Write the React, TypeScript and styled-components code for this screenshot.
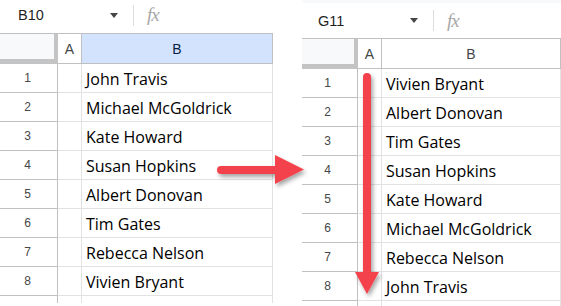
import React from 'react';
import styled, { createGlobalStyle } from 'styled-components';

const GlobalStyle = createGlobalStyle`
    html, body {
        margin: 0;
        padding: 0;
        background: #fff;
    }
    body {
        width: 561px;
        height: 306px;
        overflow: hidden;
        font-family: 'Liberation Sans', Arial, sans-serif;
    }
`;

const Page = styled.div`
    position: relative;
    display: flex;
    gap: 29px;
    width: 561px;
    height: 306px;
    overflow: hidden;
`;

const Frame = styled.div<{ $width: number; $height: number }>`
    width: ${(p) => p.$width}px;
    height: ${(p) => p.$height}px;
    flex-shrink: 0;
    overflow: hidden;
`;

const Sheet = styled.div<{ $shift: number }>`
    margin-left: -${(p) => p.$shift}px;
    display: flex;
    flex-direction: column;
`;

const TopStrip = styled.div`
    height: 3px;
    background: #f8f9fa;
`;

const FormulaBar = styled.div<{ $height: number; $pad: number }>`
    height: ${(p) => p.$height}px;
    padding-bottom: ${(p) => p.$pad}px;
    box-sizing: border-box;
    display: flex;
    align-items: center;
`;

const NameBox = styled.div`
    width: 112px;
    padding-left: 20px;
    box-sizing: border-box;
    font-size: 14.5px;
    color: #1f1f1f;
`;

const Caret = styled.span`
    width: 0;
    height: 0;
    border-left: 4.5px solid transparent;
    border-right: 4.5px solid transparent;
    border-top: 5px solid #444746;
`;

const Divider = styled.span`
    width: 1px;
    height: 21px;
    margin-left: 15px;
    background: #dadce0;
`;

const Fx = styled.span`
    margin-left: 13px;
    font-family: 'Liberation Serif', 'Times New Roman', serif;
    font-style: italic;
    font-size: 19px;
    color: #a8a8a8;
    letter-spacing: -1px;
`;

const GridRow = styled.div<{ $header?: boolean }>`
    display: grid;
    grid-template-columns: 60px 24px 1fr;
    height: ${(p) => (p.$header ? 31 : 29)}px;
    border-top: ${(p) => (p.$header ? '1px solid #c0c0c0' : 'none')};
    box-sizing: border-box;
`;

const Corner = styled.div`
    background: #f8f9fa;
    border-right: 4px solid #c4c4c4;
    border-bottom: 5px solid #c4c4c4;
`;

const ColHeader = styled.div<{ $active?: boolean }>`
    display: flex;
    align-items: center;
    justify-content: center;
    background: ${(p) => (p.$active ? '#d3e3fd' : '#fff')};
    border-right: 1px solid #c0c0c0;
    border-bottom: 1px solid #c0c0c0;
    font-size: 14px;
    color: ${(p) => (p.$active ? '#0b1f3f' : '#444746')};
`;

const RowNum = styled.div`
    display: flex;
    align-items: center;
    justify-content: center;
    border-right: 1px solid #c0c0c0;
    border-bottom: 1px solid #c0c0c0;
    font-size: 12px;
    color: #444746;
`;

const Cell = styled.div`
    display: flex;
    align-items: center;
    padding: 1px 0 0 4px;
    border-right: 1px solid #e2e2e2;
    border-bottom: 1px solid #e2e2e2;
    font-family: 'Open Sans', 'Liberation Sans', sans-serif;
    font-size: 16px;
    color: #000;
    white-space: nowrap;
    overflow: hidden;
`;

const Overlay = styled.svg`
    position: absolute;
    left: 0;
    top: 0;
    pointer-events: none;
`;

interface SpreadsheetProps {
    cellRef: string;
    names: string[];
    activeColumn?: string;
    topStrip?: boolean;
}

const Spreadsheet: React.FC<SpreadsheetProps> = ({ cellRef, names, activeColumn, topStrip }) => (
    <>
        {topStrip && <TopStrip />}
        <FormulaBar $height={topStrip ? 35 : 33} $pad={topStrip ? 0 : 3}>
            <NameBox>{cellRef}</NameBox>
            <Caret />
            <Divider />
            <Fx>fx</Fx>
        </FormulaBar>
        <GridRow $header>
            <Corner />
            <ColHeader $active={activeColumn === 'A'}>A</ColHeader>
            <ColHeader $active={activeColumn === 'B'}>B</ColHeader>
        </GridRow>
        {[...names, ''].map((name, i) => (
            <GridRow key={i}>
                <RowNum>{i + 1}</RowNum>
                <Cell />
                <Cell>{name}</Cell>
            </GridRow>
        ))}
    </>
);

const before = [
    'John Travis',
    'Michael McGoldrick',
    'Kate Howard',
    'Susan Hopkins',
    'Albert Donovan',
    'Tim Gates',
    'Rebecca Nelson',
    'Vivien Bryant',
];

const after = [
    'Vivien Bryant',
    'Albert Donovan',
    'Tim Gates',
    'Susan Hopkins',
    'Kate Howard',
    'Michael McGoldrick',
    'Rebecca Nelson',
    'John Travis',
];

const ARROW = '#f3434c';

const App: React.FC = () => (
    <>
        <GlobalStyle />
        <Page>
            <Frame $width={273} $height={303}>
                <Sheet $shift={2}>
                    <Spreadsheet cellRef="B10" names={before} activeColumn="B" />
                </Sheet>
            </Frame>
            <Frame $width={259} $height={306}>
                <Sheet $shift={4}>
                    <Spreadsheet cellRef="G11" names={after} topStrip />
                </Sheet>
            </Frame>
            <Overlay width={561} height={306} viewBox="0 0 561 306">
                <defs>
                    <filter id="shadow" x="-20%" y="-20%" width="150%" height="150%">
                        <feDropShadow dx="2" dy="3" stdDeviation="2" floodColor="#000" floodOpacity="0.35" />
                    </filter>
                </defs>
                <g fill={ARROW} filter="url(#shadow)">
                    <rect x={217} y={166} width={62} height={8} rx={4} />
                    <polygon points="275,155 304,169.5 275,184" />
                </g>
                <g fill={ARROW} filter="url(#shadow)">
                    <rect x={363} y={73} width={8} height={203} rx={4} />
                    <polygon points="355,272 379,272 367,294" />
                </g>
            </Overlay>
        </Page>
    </>
);

export default App;
